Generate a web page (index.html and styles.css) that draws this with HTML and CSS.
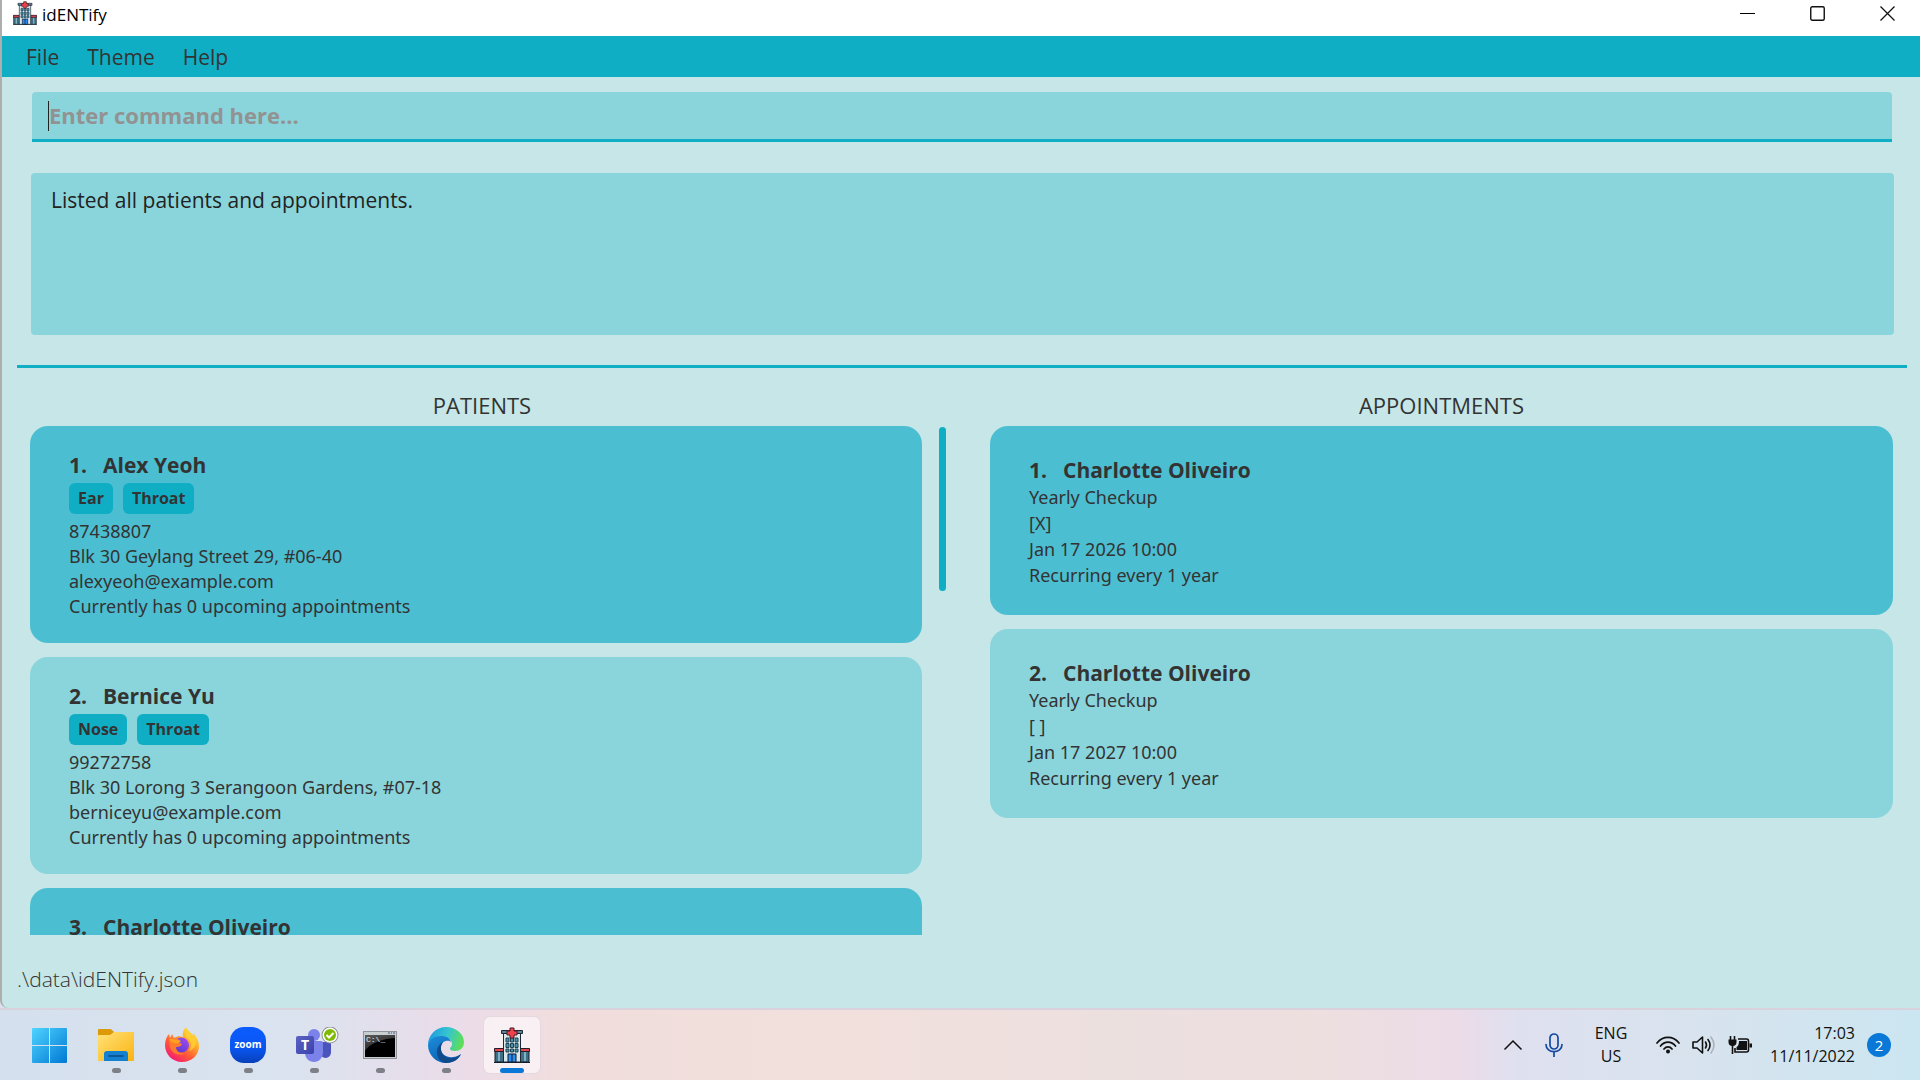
FILE: index.html
```html
<!DOCTYPE html>
<html lang="en">
<head>
<meta charset="utf-8">
<title>idENTify</title>
<meta name="viewport" content="width=device-width, initial-scale=1">
<link rel="stylesheet" href="styles.css">
</head>
<body>
<svg class="defs" width="0" height="0" aria-hidden="true">
  <defs>
    <linearGradient id="gWin" x1="0" y1="0" x2="1" y2="1"><stop offset="0" stop-color="#4fd4ff"/><stop offset="1" stop-color="#0078d4"/></linearGradient>
    <linearGradient id="gFolder" x1="0" y1="0" x2="1" y2="1"><stop offset="0" stop-color="#ffe27a"/><stop offset="1" stop-color="#fbb30f"/></linearGradient>
    <linearGradient id="gFire" x1="0.9" y1="0" x2="0.2" y2="1"><stop offset="0" stop-color="#fff14a"/><stop offset="0.35" stop-color="#ffb02a"/><stop offset="0.65" stop-color="#ff5a36"/><stop offset="1" stop-color="#f0127c"/></linearGradient>
    <linearGradient id="gGlobe" x1="0.8" y1="0" x2="0.2" y2="1"><stop offset="0" stop-color="#a04bf0"/><stop offset="1" stop-color="#5a3ad0"/></linearGradient>
    <linearGradient id="gZoom" x1="0" y1="0" x2="0" y2="1"><stop offset="0" stop-color="#0b5cff"/><stop offset="0.6" stop-color="#0a55f0"/><stop offset="1" stop-color="#0840b8"/></linearGradient>
    <linearGradient id="gTeams" x1="0" y1="0" x2="1" y2="1"><stop offset="0" stop-color="#5a62c3"/><stop offset="1" stop-color="#3a41ac"/></linearGradient>
    <linearGradient id="gEdgeTop" x1="0" y1="0.4" x2="1" y2="0.6"><stop offset="0" stop-color="#1f9be0"/><stop offset="0.5" stop-color="#35c5d0"/><stop offset="1" stop-color="#62e04e"/></linearGradient>
    <linearGradient id="gEdgeLeft" x1="0" y1="0" x2="0.6" y2="1"><stop offset="0" stop-color="#1b8fdc"/><stop offset="1" stop-color="#0d5cb0"/></linearGradient>
    <linearGradient id="gCmd" x1="0" y1="0" x2="0.6" y2="1"><stop offset="0" stop-color="#5a5a5a"/><stop offset="1" stop-color="#1c1c1c"/></linearGradient>
    <symbol id="hospital" viewBox="0 0 36 36">
      <path d="M1 22h9v13H1zM26 22h9v13h-9z" fill="#3f6f86" stroke="#14202c"/>
      <path d="M4 25h2v9H4zM30 25h2v9h-2z" fill="#7fb3c4"/>
      <path d="M0.500 21.500h9v3h-9zM26.500 21.500h9v3h-9z" fill="#e04552" stroke="#2a1a24"/>
      <path d="M9.500 6h17v29h-17z" fill="#dbe8ea" stroke="#1b2a36"/>
      <path d="M7.500 3.500h21v3h-21z" fill="#5f8296" stroke="#1b2a36"/>
      <path d="M12 11h3v4h-3zM16.500 11h3v4h-3zM21 11h3v4h-3zM12 16.500h3v4h-3zM16.500 16.500h3v4h-3zM21 16.500h3v4h-3zM12 22h3v3h-3zM16.500 22h3v3h-3zM21 22h3v3h-3z" fill="#4f93ab" stroke="#1f4354"/>
      <path d="M14 27h8v8h-8z" fill="#2d8cf0" stroke="#0c1830"/>
      <path d="M18 27v8" stroke="#0c1830"/>
      <path d="M16 1h4v3h3v4h-3v3h-4V8h-3V4h3z" fill="#f0424e" stroke="#4a1a24"/>
      <path d="M0 35.500h36" stroke="#14202c"/>
    </symbol>
  </defs>
</svg>

<main class="window">
  <header class="titlebar">
    <svg class="app-icon" viewBox="0 0 36 36" aria-hidden="true"><use href="#hospital"/></svg>
    <h1 class="app-name">idENTify</h1>
    <div class="window-buttons">
      <button class="window-button" type="button" aria-label="Minimize"><svg width="15" height="15" viewBox="0 0 15 15"><path d="M0 7.500h15" stroke="#000"/></svg></button>
      <button class="window-button" type="button" aria-label="Maximize"><svg width="15" height="15" viewBox="0 0 15 15"><rect x="0.750" y="0.750" width="13.500" height="13.500" rx="1.500" fill="none" stroke="#111" stroke-width="1.400"/></svg></button>
      <button class="window-button" type="button" aria-label="Close"><svg width="15" height="15" viewBox="0 0 15 15"><path d="M0.500 0.500l14 14M14.500 0.500l-14 14" stroke="#111" stroke-width="1.300"/></svg></button>
    </div>
  </header>

  <nav class="menubar" aria-label="Main menu">
    <button class="menu" type="button">File</button>
    <button class="menu" type="button">Theme</button>
    <button class="menu" type="button">Help</button>
  </nav>

  <div class="command">
    <input class="command-input" type="text" placeholder="Enter command here..." aria-label="Command">
    <span class="command-caret"></span>
  </div>

  <output class="result">Listed all patients and appointments.</output>

  <div class="lists">
    <section class="panel panel-patients" aria-labelledby="patients-title">
      <h2 class="panel-title" id="patients-title">PATIENTS</h2>
      <div class="panel-body">
        <ol class="cards">
          <li class="card patient odd">
            <h3 class="card-name"><span class="card-index">1.</span>Alex Yeoh</h3>
            <div class="tags"><span class="tag">Ear</span><span class="tag">Throat</span></div>
            <p class="detail">87438807</p>
            <p class="detail">Blk 30 Geylang Street 29, #06-40</p>
            <p class="detail">alexyeoh@example.com</p>
            <p class="detail">Currently has 0 upcoming appointments</p>
          </li>
          <li class="card patient">
            <h3 class="card-name"><span class="card-index">2.</span>Bernice Yu</h3>
            <div class="tags"><span class="tag">Nose</span><span class="tag">Throat</span></div>
            <p class="detail">99272758</p>
            <p class="detail">Blk 30 Lorong 3 Serangoon Gardens, #07-18</p>
            <p class="detail">berniceyu@example.com</p>
            <p class="detail">Currently has 0 upcoming appointments</p>
          </li>
          <li class="card patient odd">
            <h3 class="card-name"><span class="card-index">3.</span>Charlotte Oliveiro</h3>
          </li>
        </ol>
        <div class="scrollbar"><div class="scrollbar-thumb"></div></div>
      </div>
    </section>

    <section class="panel panel-appointments" aria-labelledby="appointments-title">
      <h2 class="panel-title" id="appointments-title">APPOINTMENTS</h2>
      <ol class="cards">
        <li class="card appointment odd">
          <h3 class="card-name"><span class="card-index">1.</span>Charlotte Oliveiro</h3>
          <p class="detail">Yearly Checkup</p>
          <p class="detail">[X]</p>
          <p class="detail">Jan 17 2026 10:00</p>
          <p class="detail">Recurring every 1 year</p>
        </li>
        <li class="card appointment">
          <h3 class="card-name"><span class="card-index">2.</span>Charlotte Oliveiro</h3>
          <p class="detail">Yearly Checkup</p>
          <p class="detail">[ ]</p>
          <p class="detail">Jan 17 2027 10:00</p>
          <p class="detail">Recurring every 1 year</p>
        </li>
      </ol>
    </section>
  </div>

  <footer class="statusbar">.\data\idENTify.json</footer>
</main>

<nav class="taskbar" aria-label="Taskbar">
  <div class="apps">
    <button class="app" type="button" aria-label="Start">
      <svg width="36" height="36" viewBox="0 0 36 36"><path d="M0 2q0-1 1-1h16v17H0zM18 1h16q1 0 1 1v16H18zM0 19h17v17H1q-1 0-1-1zM18 19h17v16q0 1-1 1H18z" fill="url(#gWin)"/></svg>
    </button>
    <button class="app running" type="button" aria-label="File Explorer">
      <svg width="36" height="36" viewBox="0 0 36 36"><path d="M0 3q0-1 1-1h11q1 0 2 1l2 2h19q1 0 1 1v6H0z" fill="#dc9a0b"/><path d="M0 9q0-1 1-1h11l4-3h19q1 0 1 1v27q0 1-1 1H1q-1 0-1-1z" fill="url(#gFolder)"/><path d="M6 34v-7q0-3 3-3h18q3 0 3 3v7z" fill="#1480d0"/><path d="M11 29h14" stroke="#0b4a86" stroke-width="1.500" stroke-linecap="round"/></svg>
    </button>
    <button class="app running" type="button" aria-label="Firefox">
      <svg width="36" height="36" viewBox="0 0 36 36"><path d="M1 18C1 13 3 9 5 7l1 4 2-4 2 4c3-2 7-2 9-1-1-4 0-7 3-10 2 5 5 5 6 9 1-1 1-2 1-3 4 4 6 8 6 13 0 9-7 16-17 16S1 27 1 18z" fill="url(#gFire)"/><circle cx="17.500" cy="18" r="7.500" fill="url(#gGlobe)"/><path d="M5 13c4-3 8-1 11 0l-1 3c2 0 3 1 3 1-1 3-5 3-6 3 0 4 4 7 9 6-6 4-14 0-15-6z" fill="#ff7a2c"/><path d="M5 12c4 0 7 0 12 2l-2 2c-4 1-8 0-10-4z" fill="#ffa023"/><path d="M22 10c5 2 7 9 3 14 8-3 9-10 3-17l-5-5c-2 3-2 6-1 8z" fill="#ffcf35" opacity="0.850"/></svg>
    </button>
    <button class="app running" type="button" aria-label="Zoom">
      <svg width="36" height="36" viewBox="0 0 36 36"><rect width="36" height="36" rx="14" fill="url(#gZoom)"/><text class="zoom-word" x="18" y="21" text-anchor="middle">zoom</text></svg>
    </button>
    <button class="app running" type="button" aria-label="Teams">
      <svg width="50" height="36" viewBox="-6 0 50 36"><path d="M25 15h9q2 0 2 2v8q0 5-5 6-4 0-6-4z" fill="#4b53bc"/><circle cx="19" cy="8" r="6" fill="#7b83eb"/><path d="M11 14h15q2 0 2 2v9c0 6-4 10-9 10s-9-4-9-9z" fill="#7b83eb"/><rect x="1" y="9" width="18" height="18" rx="2" fill="url(#gTeams)"/><text class="teams-letter" x="10" y="23" text-anchor="middle">T</text><circle cx="35" cy="8" r="8.500" fill="#8f9490"/><circle cx="35" cy="8" r="7.500" fill="#fff"/><circle cx="35" cy="8" r="6" fill="#7fba00"/><path d="M31.500 8l2.500 2.500 4.500-4.500" fill="none" stroke="#fff" stroke-width="2"/></svg>
    </button>
    <button class="app running" type="button" aria-label="Command Prompt">
      <svg width="36" height="36" viewBox="0 0 36 36"><rect x="1.500" y="4.500" width="33" height="27" fill="#c8cdd0" stroke="#8e9498"/><path d="M3 8h30v22H3z" fill="#000"/><path d="M3 8h30v3C20 12 8 16 3 24z" fill="url(#gCmd)"/><path d="M26 6h2M29 6h1M31 6h2" stroke="#445a8a"/><text class="prompt" x="4" y="15">C:\_</text></svg>
    </button>
    <button class="app running" type="button" aria-label="Edge">
      <svg width="36" height="36" viewBox="0 0 36 36"><path d="M0 18C0 8 8 0 18 0s18 7 18 15c0 6-4 9-9 9-3 0-5-1-5-2 0-2 2-2 2-5 0-4-4-7-9-7C7 10 1 13 0 18z" fill="url(#gEdgeTop)"/><path d="M0 18c1-6 7-9 13-9 5 0 9 2 10 6-2-2-9-2-10 5-1 8 7 11 12 10 3 0 6-2 8-3-2 5-8 9-15 9C8 36 0 28 0 18z" fill="url(#gEdgeLeft)"/><path d="M13 20c-1 8 6 12 12 11 3 0 6-2 8-4-2 5-8 9-15 9-6-1-9-6-9-11 0-4 2-8 6-10-1 1-2 3-2 5z" fill="#114a8b"/></svg>
    </button>
    <button class="app running active" type="button" aria-label="idENTify">
      <svg width="36" height="36" viewBox="0 0 36 36"><use href="#hospital"/></svg>
    </button>
  </div>

  <div class="tray">
    <button class="tray-button tray-chevron" type="button" aria-label="Show hidden icons"><svg width="20" height="12" viewBox="0 0 20 12"><path d="M1.500 10.500L10 2l8.500 8.500" fill="none" stroke="#111" stroke-width="1.500"/></svg></button>
    <button class="tray-button tray-mic" type="button" aria-label="Microphone"><svg width="18" height="24" viewBox="0 0 18 24"><g fill="none" stroke="#1449a0" stroke-width="1.700" stroke-linecap="round"><rect x="5" y="1" width="8" height="15" rx="4"/><path d="M1 11.500c0 9.500 16 9.500 16 0M9 19v4.500"/></g></svg></button>
    <button class="tray-button tray-language" type="button"><span>ENG</span><span>US</span></button>
    <button class="tray-button tray-status" type="button" aria-label="Network, volume and battery">
      <svg width="24" height="18" viewBox="0 0 24 18"><g fill="none" stroke="#111" stroke-width="1.700" stroke-linecap="round"><path d="M1 7C7-0.500 17-0.500 23 7M4.500 10c4.200-5.200 10.800-5.200 15 0M8 13c2.200-2.800 5.800-2.800 8 0"/></g><circle cx="12" cy="15.500" r="2" fill="#111"/></svg>
      <svg width="24" height="20" viewBox="0 0 24 20"><g fill="none" stroke-width="1.600" stroke-linecap="round" stroke-linejoin="round"><path d="M1 7h4l5.500-5v16L5 13H1z" stroke="#111"/><path d="M13.500 7q2 3 0 6M16 4.500q4 5.500 0 11" stroke="#111"/><path d="M19 2q6 8 0 16" stroke="#aab2ba"/></g></svg>
      <svg width="24" height="20" viewBox="0 0 24 20"><path d="M2.500 1v4M6.500 1v4M4.500 9v10" stroke="#111" stroke-width="1.600"/><path d="M0.500 4.500h8V7q0 4-4 4t-4-4z" fill="#111"/><path d="M10 4h8.500q2 0 2 2v9q0 2-2 2H7v-4" fill="none" stroke="#111" stroke-width="1.600"/><path d="M11 6h8v9H8.500v-3Q11 11 11 6zM21.500 8.500H24v4h-2.500z" fill="#111"/></svg>
    </button>
    <button class="tray-button tray-clock" type="button"><span>17:03</span><span>11/11/2022</span></button>
    <button class="tray-badge" type="button" aria-label="Notifications">2</button>
  </div>
</nav>
</body>
</html>
```
FILE: styles.css
```css
:root {
  --accent: #10aec5;
  --surface: #c6e6e7;
  --card: #8ad5db;
  --card-odd: #4cbed1;
  --ink: #333;
}

* {
  box-sizing: border-box;
}

body {
  margin: 0;
  height: 100vh;
  display: flex;
  flex-direction: column;
  background: #d8e1ee;
  color: var(--ink);
  font-family: "Open Sans", "Noto Sans", sans-serif;
  overflow: hidden;
}

button,
input {
  font: inherit;
  color: inherit;
}

button {
  padding: 0;
  border: 0;
  background: none;
}

h1, h2, h3, p, ol {
  margin: 0;
  padding: 0;
}

svg {
  display: block;
}

.defs {
  position: absolute;
}

/* Application window */

.window {
  flex: 1;
  min-height: 0;
  display: flex;
  flex-direction: column;
  background: var(--surface);
  border-left: 2px solid #aeaeae;
  border-radius: 0 0 0 8px;
}

.titlebar {
  flex: none;
  height: 36px;
  display: flex;
  align-items: flex-start;
  padding-left: 11px;
  background: #fff;
}

.app-icon {
  width: 24px;
  height: 24px;
  margin-top: 1px;
}

.app-name {
  margin-left: 5px;
  color: #000;
  font-size: 17px;
  font-weight: 400;
  line-height: 29px;
}

.window-buttons {
  display: flex;
  margin-left: auto;
}

.window-button {
  width: 70px;
  height: 27px;
  display: flex;
  align-items: center;
  justify-content: center;
}

.window-button:last-child {
  width: 66px;
  margin-left: 2px;
}

.menubar {
  flex: none;
  height: 41px;
  display: flex;
  align-items: center;
  gap: 28px;
  padding-left: 24px;
  background: var(--accent);
}

.menu {
  font-size: 21px;
  line-height: 30px;
}

.command {
  position: relative;
  flex: none;
  margin: 15px 28px 0 30px;
}

.command-input {
  display: block;
  width: 100%;
  height: 50px;
  padding: 0 17px 2px;
  border: 0;
  border-bottom: 3px solid var(--accent);
  border-radius: 4px 4px 0 0;
  outline: 0;
  background: var(--card);
  font-size: 22px;
  font-weight: 700;
}

.command-input::placeholder {
  color: #929292;
  opacity: 1;
}

.command-caret {
  position: absolute;
  top: 9px;
  left: 16px;
  width: 1px;
  height: 30px;
  background: #222;
}

.result {
  flex: none;
  display: block;
  height: 162px;
  margin: 31px 26px 0 29px;
  padding: 12px 20px;
  border-radius: 4px;
  background: var(--card);
  color: #222;
  font-size: 21px;
  line-height: 30px;
}

/* Patient and appointment lists */

.lists {
  flex: 1;
  min-height: 0;
  display: flex;
  gap: 44px;
  margin: 30px 13px 0 15px;
  padding: 0 14px 0 13px;
  border-top: 3px solid var(--accent);
}

.panel {
  display: flex;
  flex-direction: column;
  min-width: 0;
  min-height: 0;
}

.panel-patients {
  flex: 916;
}

.panel-appointments {
  flex: 903;
}

.panel-title {
  flex: none;
  height: 58px;
  padding-top: 22px;
  font-size: 22px;
  font-weight: 400;
  line-height: 30px;
  text-align: center;
}

.panel-patients .panel-title {
  padding-right: 12px;
}

.panel-body {
  flex: 1;
  min-height: 0;
  display: flex;
  gap: 17px;
  overflow: hidden;
}

.cards {
  flex: 1;
  display: flex;
  flex-direction: column;
  gap: 14px;
  list-style: none;
}

.card {
  flex: none;
  border-radius: 18px;
  background: var(--card);
  padding: 25px 39px 24px;
}

.card.odd {
  background: var(--card-odd);
}

.appointment {
  padding: 30px 39px 27px;
}

.card-name {
  display: flex;
  gap: 16px;
  font-size: 21px;
  font-weight: 700;
  line-height: 28px;
}

.card-index {
  flex: none;
}

.tags {
  display: flex;
  gap: 10px;
  margin: 4px 0 5px;
}

.tag {
  padding: 0 9px;
  border-radius: 6px;
  background: var(--accent);
  font-size: 16px;
  font-weight: 700;
  line-height: 31px;
}

.detail {
  font-family: "Noto Sans", "Open Sans", sans-serif;
  font-size: 18px;
  line-height: 25px;
}

.appointment .detail {
  line-height: 26px;
}

.scrollbar {
  flex: none;
  width: 7px;
  padding-top: 1px;
}

.scrollbar-thumb {
  height: 164px;
  border-radius: 4px;
  background: var(--accent);
}

.statusbar {
  flex: none;
  height: 73px;
  padding: 29px 15px 0;
  font-size: 21px;
  font-weight: 300;
  line-height: 30px;
}

/* Taskbar */

.taskbar {
  flex: none;
  height: 72px;
  display: flex;
  align-items: center;
  justify-content: space-between;
  padding: 0 29px 0 22px;
  border-top: 2px solid #d9d2dc;
  background: linear-gradient(90deg, #d5e0ee 0%, #dae3ef 15%, #ebdce9 24%, #f1dedc 30%, #f2e0dc 44%, #ece0df 58%, #eedfdf 68%, #ebdce8 76%, #dfe0ef 79%, #d8e3ee 88%, #cbe6f1 100%);
}

.apps {
  display: flex;
  gap: 10px;
}

.app {
  position: relative;
  width: 56px;
  height: 56px;
  display: flex;
  align-items: center;
  justify-content: center;
  border-radius: 6px;
}

.app.active {
  background: #f8f0f3;
  box-shadow: 0 0 0 1px #e6d8df;
}

.app.running::after {
  content: "";
  position: absolute;
  bottom: 0;
  left: 50%;
  width: 9px;
  height: 5px;
  margin-left: -4px;
  border-radius: 3px;
  background: #7d8087;
}

.app.active::after {
  width: 24px;
  margin-left: -12px;
  background: #0a78d6;
}

.zoom-word {
  fill: #fff;
  font-size: 10px;
  font-weight: 700;
}

.teams-letter {
  fill: #fff;
  font-size: 14px;
  font-weight: 700;
}

.prompt {
  fill: #eee;
  font-family: "Liberation Mono", monospace;
  font-size: 8px;
}

.tray {
  display: flex;
  align-items: center;
  color: #111;
  font-size: 16px;
  line-height: 23px;
}

.tray-button {
  display: flex;
  align-items: center;
}

.tray-mic {
  margin-left: 22px;
}

.tray-language {
  flex-direction: column;
  width: 48px;
  margin-left: 24px;
}

.tray-status {
  gap: 12px;
  margin-left: 21px;
}

.tray-clock {
  flex-direction: column;
  align-items: flex-end;
  width: 92px;
  margin-left: 11px;
}

.tray-badge {
  width: 24px;
  height: 24px;
  margin-left: 12px;
  border-radius: 50%;
  background: #0a78d6;
  color: #fff;
  font-size: 15px;
  line-height: 24px;
}
```
